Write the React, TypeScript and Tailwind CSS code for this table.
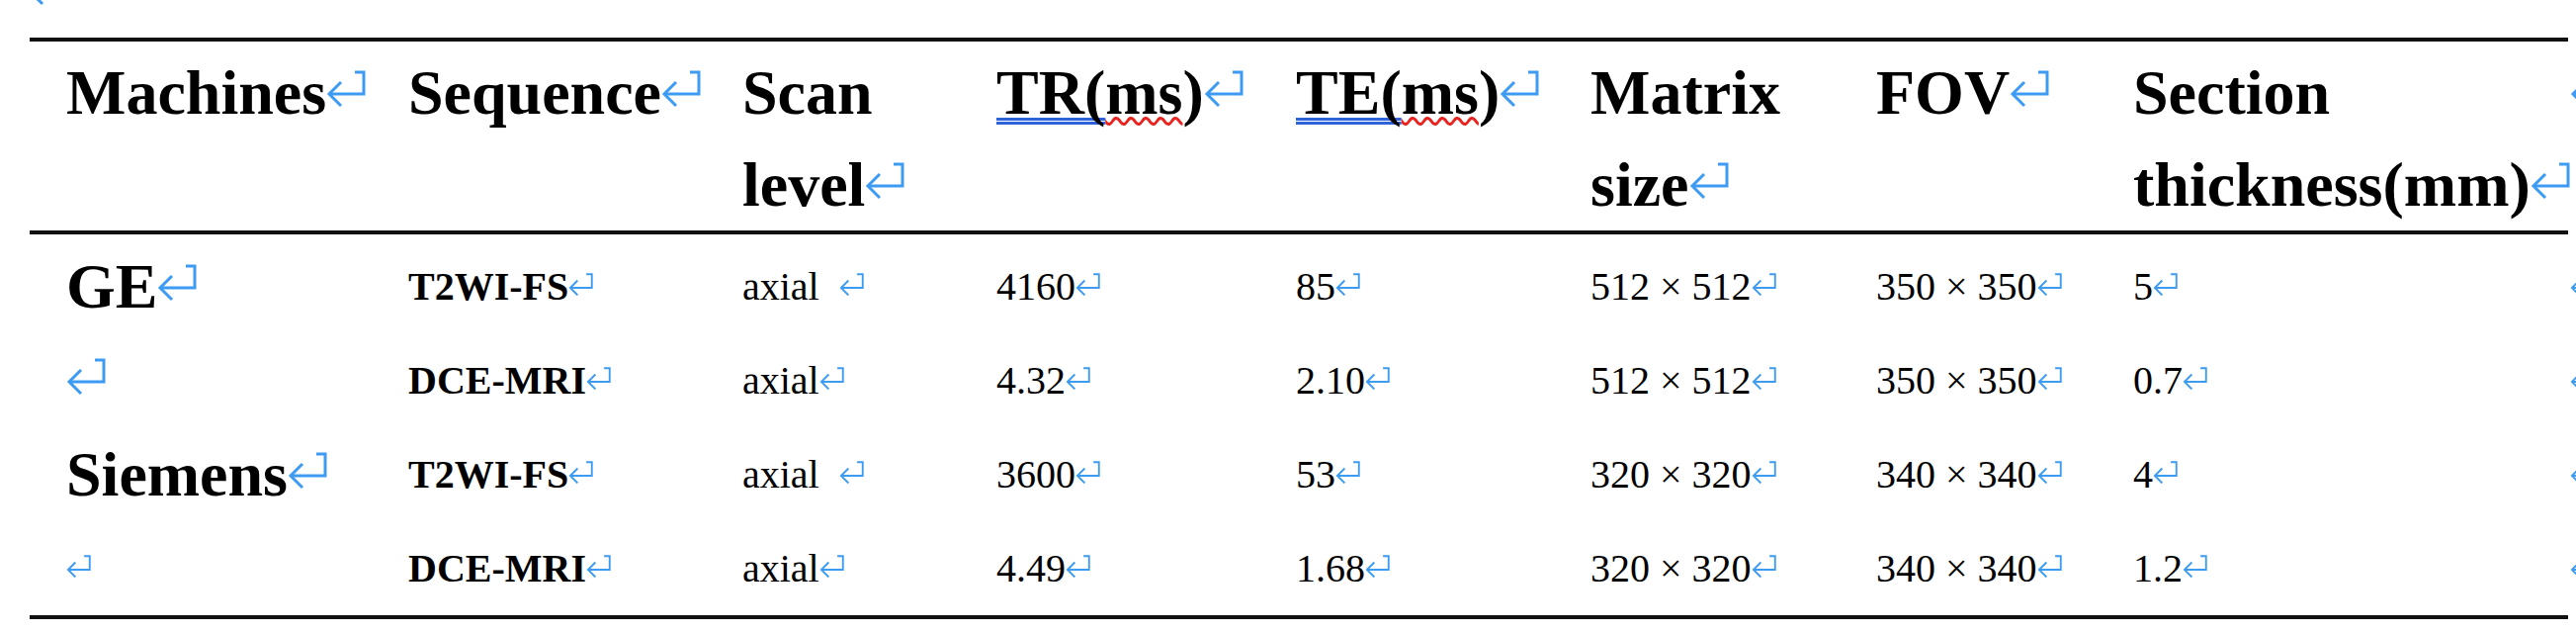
import React from "react";

function Mark({ className = "" }: { className?: string }) {
  return (
    <svg
      viewBox="0 0 40 38"
      fill="none"
      stroke="#3d9bf2"
      strokeWidth="3"
      className={`inline-block w-[0.625em] h-[0.594em] mb-[0.09em] align-baseline shrink-0 ${className}`}
    >
      <path d="M29 2H38V24H4" />
      <path d="M15 12L3 24L15 36" />
    </svg>
  );
}

const cols =
  "grid grid-cols-[346px_338px_257px_303px_298px_289px_260px_477px_40px]";

type Row = {
  m: string;
  mSmall?: boolean;
  seq: string;
  scan: string;
  gap?: boolean;
  tr: string;
  te: string;
  matrix: string;
  fov: string;
  sec: string;
};

const rows: Row[] = [
  { m: "GE", seq: "T2WI-FS", scan: "axial", gap: true, tr: "4160", te: "85", matrix: "512 × 512", fov: "350 × 350", sec: "5" },
  { m: "", seq: "DCE-MRI", scan: "axial", tr: "4.32", te: "2.10", matrix: "512 × 512", fov: "350 × 350", sec: "0.7" },
  { m: "Siemens", seq: "T2WI-FS", scan: "axial", gap: true, tr: "3600", te: "53", matrix: "320 × 320", fov: "340 × 340", sec: "4" },
  { m: "", mSmall: true, seq: "DCE-MRI", scan: "axial", tr: "4.49", te: "1.68", matrix: "320 × 320", fov: "340 × 340", sec: "1.2" },
];

const blue =
  "underline decoration-double decoration-[#2f63dc] [text-decoration-thickness:3px] underline-offset-[4px] [text-decoration-skip-ink:none]";
const red =
  "underline decoration-wavy decoration-[#e8231f] [text-decoration-thickness:3px] underline-offset-[3px] [text-decoration-skip-ink:none]";

export default function App() {
  return (
    <div className="w-[2606px] h-[640px] overflow-hidden bg-white text-black font-['Liberation_Serif','Times_New_Roman',serif]">
      <div className="flex h-[38px]">
        <Mark className="ml-[28px] -mt-[32px] text-[64px]" />
      </div>
      <div className="ml-[30px] w-[2568px] border-t-4 border-b-4 border-[#111]">
        {/* Header */}
        <div className="border-b-4 border-[#111]">
          <div className={`${cols} pt-[5px] text-[64px] leading-[93px] font-bold whitespace-nowrap`}>
            <div className="pl-[37px]">Machines<Mark /></div>
            <div className="pl-[37px]">Sequence<Mark /></div>
            <div className="pl-[37px]">Scan<br />level<Mark /></div>
            <div className="pl-[37px]">
              <span className={blue}>TR(</span>
              <span className={red}>ms</span>)<Mark />
            </div>
            <div className="pl-[37px]">
              <span className={blue}>TE(</span>
              <span className={red}>ms</span>)<Mark />
            </div>
            <div className="pl-[37px]">Matrix<br />size<Mark /></div>
            <div className="pl-[37px]">FOV<Mark /></div>
            <div className="pl-[37px]">Section<br />thickness(mm)<Mark /></div>
            <div className="pl-[2px]"><Mark /></div>
          </div>
        </div>
        {/* Body */}
        <div className="pt-[5px]">
          {rows.map((r, i) => (
            <div key={i} className={`${cols} h-[95px] text-[40px] leading-[95px] whitespace-nowrap`}>
              <div className={`pl-[37px] font-bold ${r.mSmall ? "text-[40px]" : "text-[64px]"}`}>
                {r.m}
                <Mark />
              </div>
              <div className="pl-[37px] font-bold">{r.seq}<Mark /></div>
              <div className="pl-[37px]">
                {r.scan}
                <Mark className={r.gap ? "ml-[20px]" : ""} />
              </div>
              <div className="pl-[37px]">{r.tr}<Mark /></div>
              <div className="pl-[37px]">{r.te}<Mark /></div>
              <div className="pl-[37px]">{r.matrix}<Mark /></div>
              <div className="pl-[37px]">{r.fov}<Mark /></div>
              <div className="pl-[37px]">{r.sec}<Mark /></div>
              <div className="pl-[2px]"><Mark /></div>
            </div>
          ))}
        </div>
      </div>
    </div>
  );
}
